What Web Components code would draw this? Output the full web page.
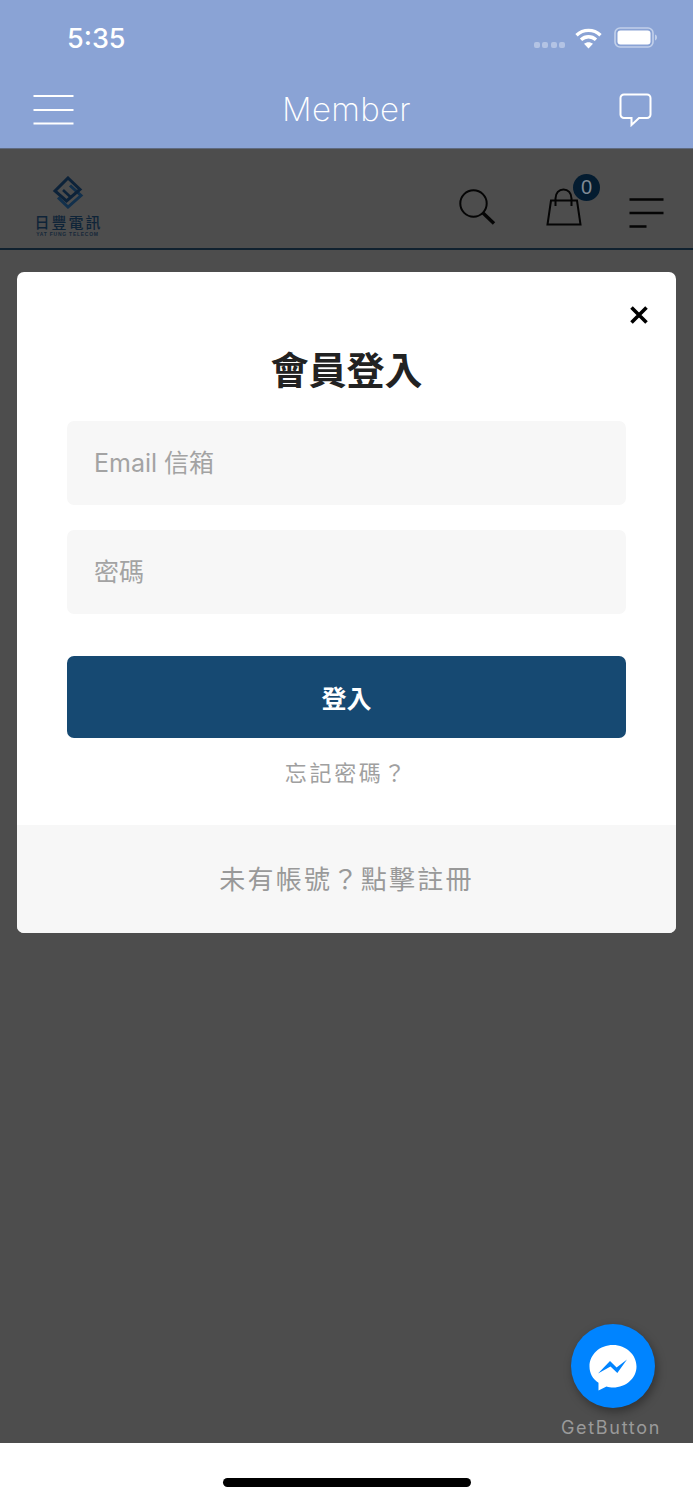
<!DOCTYPE html>
<html lang="zh-Hant">
<head>
<meta charset="utf-8">
<title>Member</title>
<style>
    html, body { margin: 0; padding: 0; }
    body { width: 693px; height: 1500px; overflow: hidden; font-family: "Inter", "Noto Sans CJK TC", sans-serif; }
</style>
</head>
<body>
<app-shell>
    <status-bar></status-bar>
    <nav-bar title="Member"></nav-bar>
    <site-header></site-header>
    <login-modal></login-modal>
    <get-button></get-button>
    <home-bar></home-bar>
</app-shell>

<script>
const CJK = '"Noto Sans CJK TC", sans-serif';

class AppShell extends HTMLElement {
    connectedCallback() {
        this.attachShadow({mode: 'open'});
        this.shadowRoot.innerHTML = `<style>
            :host { display: flex; flex-direction: column; position: relative; width: 693px; height: 1500px; background: #4d4d4d; }
        </style><slot></slot>`;
    }
}

class StatusBar extends HTMLElement {
    connectedCallback() {
        this.attachShadow({mode: 'open'});
        this.shadowRoot.innerHTML = `<style>
            :host { display: flex; align-items: flex-start; height: 75px; background: #8aa3d5; color: #fff; }
            .time { margin: 22px 0 0 67px; font: 500 27px/34px "Inter", sans-serif; }
            .right { margin: 27px 35px 0 auto; display: flex; align-items: flex-start; }
            .dots { display: flex; gap: 2.5px; margin: 15px 10px 0 0; }
            .dots i { width: 6px; height: 6px; border-radius: 2px; background: #b3c3e4; }
            svg { display: block; }
            .wifi { margin-right: 12px; }
        </style>
        <div class="time">5:35</div>
        <div class="right">
            <div class="dots"><i></i><i></i><i></i><i></i></div>
            <svg class="wifi" width="27" height="22" viewBox="0 0 27 22" fill="none" stroke="#fff" stroke-width="3.4">
                <path d="M1.5 8.2C8.3 1.8 18.700 1.8 25.5 8.2"/>
                <path d="M6 12.8C10.4 8.8 16.6 8.8 21 12.8"/>
                <path d="M13.5 21.5 9 16.8C11.6 14.6 15.4 14.6 18 16.8Z" fill="#fff" stroke="none"/>
            </svg>
            <svg width="44" height="22" viewBox="0 0 44 22">
                <rect x="1" y="1" width="38" height="19" rx="5" fill="none" stroke="#c2d0ea" stroke-width="1.6"/>
                <rect x="3.5" y="3.5" width="33" height="14" rx="3" fill="#fff"/>
                <path d="M41 7.5c1.4.4 2 1.6 2 3s-.6 2.600-2 3z" fill="#c2d0ea"/>
            </svg>
        </div>`;
    }
}

class NavBar extends HTMLElement {
    connectedCallback() {
        this.attachShadow({mode: 'open'});
        this.shadowRoot.innerHTML = `<style>
            :host { display: flex; align-items: center; justify-content: space-between; box-sizing: border-box; height: 73px; padding: 0 41px 4px 33px; background: #8aa3d5; color: #fff; }
            .title { font: 200 33px/40px "Inter", sans-serif; margin-top: -1px; letter-spacing: .3px; }
            svg { display: block; }
        </style>
        <svg width="41" height="31" viewBox="0 0 41 31" stroke="#fff" stroke-width="2">
            <path d="M0.500 2H40.500M0.500 16H40.500M0.500 29.500H40.500"/>
        </svg>
        <div class="title">${this.getAttribute('title')}</div>
        <svg width="33" height="34" viewBox="0 0 33 34" fill="none" stroke="#fff" stroke-width="2">
            <path d="M5 1.500H28A3.500 3.500 0 0 1 31.500 5V21.500A3.500 3.500 0 0 1 28 25H20L12.500 32V25H5A3.500 3.500 0 0 1 1.500 21.500V5A3.500 3.500 0 0 1 5 1.500Z"/>
        </svg>`;
    }
}

class SiteHeader extends HTMLElement {
    connectedCallback() {
        this.attachShadow({mode: 'open'});
        this.shadowRoot.innerHTML = `<style>
            :host { display: flex; align-items: flex-start; box-sizing: border-box; height: 102px; padding: 27px 29px 0 34px; border-bottom: 2px solid #10212f; border-top: 1px solid #5f6a80; }
            svg { display: block; }
            .logo { width: 67px; display: flex; flex-direction: column; align-items: center; color: #0f2438; }
            .logo .cn { font: 500 15px/16px ${CJK}; letter-spacing: 2px; margin: 5px 0 0 2px; white-space: nowrap; }
            .logo .en { font: 700 5px/6px "Liberation Sans", sans-serif; letter-spacing: .75px; margin-top: 1px; white-space: nowrap; color: #16283a; }
            .search { margin: 13px 0 0 auto; }
            .bag { position: relative; margin: 12px 0 0 50px; width: 36px; height: 38px; }
            .badge { position: absolute; left: 27px; top: -14px; width: 27px; height: 27px; border-radius: 50%; background: #041c30; color: #7f8a94; font: 400 20px/27px "Liberation Sans", sans-serif; text-align: center; }
            .menu { margin: 22px 0 0 47px; }
        </style>
        <div class="logo">
            <svg width="32" height="33" viewBox="0 0 32 33" fill="none" stroke-width="3">
                <path d="M18 9.500 29 19.500 16 31 6 21.500" stroke="#12304c"/>
                <path d="M16 2 28 13.500 14.500 25 3 15Z" stroke="#0c2239"/>
                <path d="M11 14 19 21.500" stroke="#0c2239" stroke-width="2.500"/>
            </svg>
            <div class="cn">日豐電訊</div>
            <div class="en">YAT FUNG TELECOM</div>
        </div>
        <svg class="search" width="37" height="36" viewBox="0 0 37 36" fill="none" stroke="#050505">
            <circle cx="14.500" cy="14.500" r="13.200" stroke-width="2"/>
            <path d="M24 24 35 34.500" stroke-width="3.400"/>
        </svg>
        <div class="bag">
            <svg width="36" height="38" viewBox="0 0 36 38" fill="none" stroke="#050505" stroke-width="2">
                <path d="M5 12.500H31L34.500 36.500H1.500Z"/>
                <path d="M9.500 18V10.500C9.500 5 13 1.500 17.500 1.500S25.500 5 25.500 10.500V18"/>
            </svg>
            <div class="badge">0</div>
        </div>
        <svg class="menu" width="35" height="30" viewBox="0 0 35 30" stroke="#050505" stroke-width="2.400">
            <path d="M0.500 1.500H34.500M0.500 15H34.500M0.500 28.500H17.500"/>
        </svg>`;
    }
}

class LoginField extends HTMLElement {
    connectedCallback() {
        this.attachShadow({mode: 'open'});
        this.shadowRoot.innerHTML = `<style>
            :host { display: flex; align-items: center; box-sizing: border-box; height: 84px; padding: 0 27px; background: #f7f7f7; border-radius: 7px; color: #a3a3a3; font: 400 25px/32px "Inter", ${CJK}; }
        </style><slot></slot>`;
    }
}

class LoginModal extends HTMLElement {
    connectedCallback() {
        this.attachShadow({mode: 'open'});
        this.shadowRoot.innerHTML = `<style>
            :host { display: flex; flex-direction: column; position: relative; box-sizing: border-box; height: 661px; margin: 22px 17px 0; background: #fff; border-radius: 7px; overflow: hidden; }
            .body { flex: 1; display: flex; flex-direction: column; padding: 0 50px; }
            .close { position: absolute; right: 28px; top: 34px; display: block; }
            h1 { margin: 73px 0 30px; height: 46px; text-align: center; color: #222; font: 700 38px/46px ${CJK}; }
            login-field + login-field { margin-top: 25px; }
            button { display: block; margin-top: 42px; height: 82px; border: 0; border-radius: 7px; background: #164972; color: #fff; font: 700 25px/32px ${CJK}; }
            .forgot { margin-top: 17px; text-align: center; color: #a0a0a0; font: 400 22px/32px ${CJK}; letter-spacing: 2.700px; }
            .foot { display: flex; align-items: center; justify-content: center; box-sizing: border-box; height: 108px; padding-bottom: 2px; background: #f7f7f7; color: #999; font: 400 26px/34px ${CJK}; letter-spacing: 2.300px; }
        </style>
        <svg class="close" width="18" height="18" viewBox="0 0 18 18" stroke="#000" stroke-width="3.600">
            <path d="M1.500 1.500 16.500 16.500M16.500 1.500 1.500 16.500"/>
        </svg>
        <div class="body">
            <h1>會員登入</h1>
            <login-field>Email 信箱</login-field>
            <login-field>密碼</login-field>
            <button>登入</button>
            <div class="forgot">忘記密碼？</div>
        </div>
        <div class="foot">未有帳號？點擊註冊</div>`;
    }
}

class GetButton extends HTMLElement {
    connectedCallback() {
        this.attachShadow({mode: 'open'});
        this.shadowRoot.innerHTML = `<style>
            :host { display: flex; flex-direction: column; align-items: center; position: absolute; left: 555px; top: 1324px; width: 116px; }
            .round { display: flex; align-items: center; justify-content: center; width: 84px; height: 84px; border-radius: 50%; background: #0084ff; box-shadow: 2px 4px 10px rgba(0,0,0,.35); }
            svg { display: block; margin-top: 4px; }
            .label { margin: 9px 0 0 -4px; color: #9a9a9a; font: 400 18px/22px "Inter", sans-serif; letter-spacing: 1.700px; white-space: nowrap; }
        </style>
        <div class="round">
            <svg width="48" height="48" viewBox="0 0 48 48">
                <path d="M24 1C10.700 1 .500 10.400 .500 22.500c0 6.700 3.100 12.500 9 16.300V46.500l8-4.100c2 .7 4.700 1.100 6.500 1.100 13.300 0 23.500-9.400 23.500-21S37.300 1 24 1Z" fill="#fff"/>
                <path d="M9 29.500 21 17l6.600 6.400L38 15.500 28.300 29 21.500 22.500Z" fill="#0084ff"/>
            </svg>
        </div>
        <div class="label">GetButton</div>`;
    }
}

class HomeBar extends HTMLElement {
    connectedCallback() {
        this.attachShadow({mode: 'open'});
        this.shadowRoot.innerHTML = `<style>
            :host { display: flex; justify-content: center; box-sizing: border-box; height: 57px; margin-top: auto; padding-top: 35px; background: #fff; }
            i { display: block; width: 248px; height: 9px; border-radius: 5px; background: #000; }
        </style><i></i>`;
    }
}

customElements.define('app-shell', AppShell);
customElements.define('status-bar', StatusBar);
customElements.define('nav-bar', NavBar);
customElements.define('site-header', SiteHeader);
customElements.define('login-field', LoginField);
customElements.define('login-modal', LoginModal);
customElements.define('get-button', GetButton);
customElements.define('home-bar', HomeBar);
</script>
</body>
</html>
